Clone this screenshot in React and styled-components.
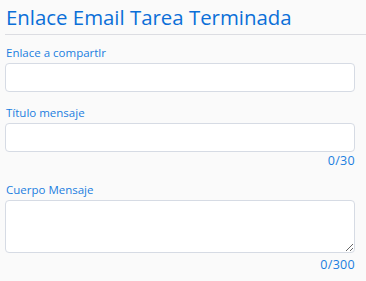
import React from 'react';
import styled, { createGlobalStyle } from 'styled-components';

const GlobalStyle = createGlobalStyle`
  html, body {
    margin: 0;
    padding: 0;
    background: #fafafa;
  }
  body {
    font-family: "Open Sans", "Liberation Sans", sans-serif;
  }
`;

const Panel = styled.div`
  width: 366px;
  height: 281px;
  box-sizing: border-box;
  background: #fafafa;
  padding: 0 11px 0 5px;
`;

const Title = styled.h1`
  margin: 0;
  padding: 4px 0 0 1px;
  font-size: 20.4px;
  line-height: 26px;
  font-weight: 400;
  color: #0b6fd8;
`;

const Divider = styled.hr`
  border: none;
  border-top: 1px solid #dcdde2;
  margin: 4px -11px 0 0;
`;

const Field = styled.div`
  display: flex;
  flex-direction: column;
  margin-top: ${(p) => p.$top}px;
`;

const Label = styled.label`
  font-size: 11.5px;
  line-height: 14px;
  color: #1a7ee0;
  padding-left: 1px;
  margin-bottom: 3px;
`;

const Input = styled.input`
  box-sizing: border-box;
  height: 29px;
  width: 100%;
  border: 1px solid #d6dbe4;
  border-radius: 4px;
  background: #fff;
  outline: none;
  margin: 0;
`;

const TextArea = styled.textarea`
  box-sizing: border-box;
  height: 53px;
  width: 100%;
  border: 1px solid #d6dbe4;
  border-radius: 4px;
  background: #fff;
  outline: none;
  margin: 0;
  display: block;
`;

const Counter = styled.div`
  align-self: flex-end;
  font-size: 12.5px;
  line-height: 14px;
  color: #1a7ee0;
  margin-top: ${(p) => p.$gap}px;
  letter-spacing: 0.3px;
`;

const App = () => (
  <Panel>
    <GlobalStyle />
    <Title>Enlace Email Tarea Terminada</Title>
    <Divider />
    <Field $top={11}>
      <Label>Enlace a compartlr</Label>
      <Input />
    </Field>
    <Field $top={14}>
      <Label>Título mensaje</Label>
      <Input />
      <Counter $gap={2}>0/30</Counter>
    </Field>
    <Field $top={15}>
      <Label>Cuerpo Mensaje</Label>
      <TextArea />
      <Counter $gap={5}>0/300</Counter>
    </Field>
  </Panel>
);

export default App;
